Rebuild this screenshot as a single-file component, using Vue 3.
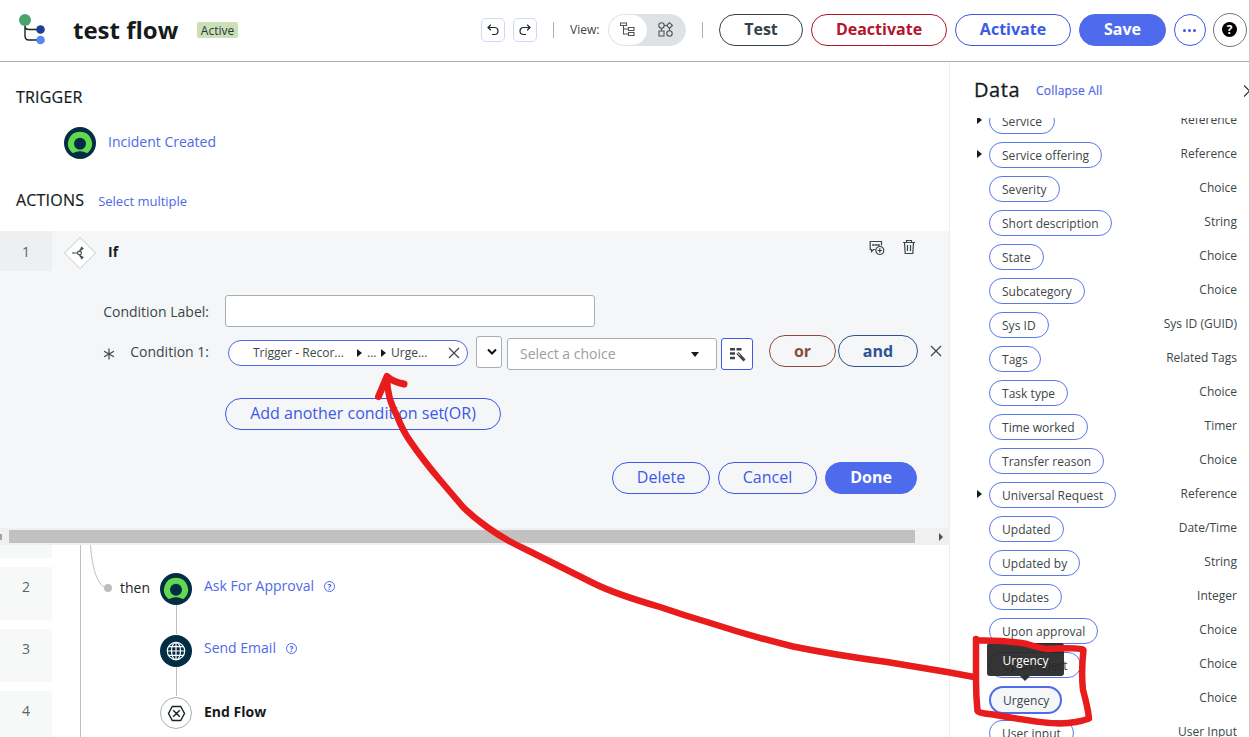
<template>
  <div class="designer">
    <header class="topbar">
      <svg class="logo" width="28" height="32" viewBox="0 0 28 32">
        <path d="M6 8V22Q6 26 10 26H20M6 8V12Q6 15.500 10 15.500H20" fill="none" stroke="#1c2426" stroke-width="1.400" />
        <circle cx="6" cy="6" r="6" fill="#4ba46e" />
        <circle cx="21.500" cy="15.500" r="4.300" fill="#1f3f94" />
        <circle cx="21.500" cy="26" r="4.300" fill="#5b86ee" />
      </svg>
      <h1 class="flow-title">test flow</h1>
      <span class="status">Active</span>

      <button class="square-btn undo">
        <svg width="12" height="12" viewBox="0 0 12 12" class="line-icon">
          <path d="M1 3.500H7.500A3.500 3.500 0 0 1 7.500 10.500H5M3.800 .8L1 3.500L3.800 6.200" />
        </svg>
      </button>
      <button class="square-btn">
        <svg width="12" height="12" viewBox="0 0 12 12" class="line-icon">
          <path d="M11 3.500H4.500A3.500 3.500 0 0 0 4.500 10.500H7M8.200 .8L11 3.500L8.200 6.200" />
        </svg>
      </button>
      <span class="divider"></span>
      <span class="view-label">View:</span>
      <div class="toggle">
        <span class="toggle-item on">
          <svg width="15" height="15" viewBox="0 0 15 15" class="gray-icon">
            <path d="M.5 1h6v2.500h-6zM8.500 5.500h5.500v3h-5.500zM8.500 10.500h5.500v3h-5.500zM3.500 3.500V12H8.500M3.500 7H8.500" />
          </svg>
        </span>
        <span class="toggle-item">
          <svg width="15" height="15" viewBox="0 0 15 15" class="gray-icon">
            <circle cx="3.500" cy="3.500" r="2.700" />
            <circle cx="11.500" cy="11.500" r="2.700" />
            <path d="M11.500 .6L14.400 3.500L11.500 6.400L8.600 3.500zM1 9h5v5h-5zM6.200 3.500H8.600M3.500 6.200V9M11.500 6.400V8.800" />
          </svg>
        </span>
      </div>
      <span class="divider second"></span>
      <button class="pill-btn dark test">Test</button>
      <button class="pill-btn red deactivate">Deactivate</button>
      <button class="pill-btn blue activate">Activate</button>
      <button class="pill-btn solid save">Save</button>
      <button class="round-btn more"><i></i><i></i><i></i></button>
      <button class="round-btn help"><b>?</b></button>
    </header>

    <div class="body">
      <main class="canvas">
        <h2 class="section-title">TRIGGER</h2>
        <div class="trigger">
          <svg width="32" height="32" viewBox="0 0 32 32">
            <use href="#now-badge" />
          </svg>
          <a class="node-link">Incident Created</a>
        </div>
        <div class="actions-head">
          <h2 class="section-title">ACTIONS</h2>
          <a class="select-multiple">Select multiple</a>
        </div>

        <section class="editor">
          <div class="editor-head">
            <span class="step-no">1</span>
            <svg class="diamond" width="34" height="34" viewBox="0 0 34 34">
              <path d="M17 1.500L32.500 17L17 32.500L1.500 17z" fill="#fff" stroke="#c4c8ca" />
              <g fill="none" stroke="#3b4648" stroke-width="1.100">
                <path d="M9 17H15M17 15Q17 12.500 19 12.500H20M17 19Q17 21.500 19 21.500H20M18 10.800L20 12.500L18 14.200M18 19.800L20 21.500L18 23.200" />
                <circle cx="16.500" cy="17" r="1.900" />
              </g>
            </svg>
            <strong class="if-label">If</strong>
            <svg class="comment-icon" width="16" height="16" viewBox="0 0 16 16">
              <g fill="none" stroke="#3b4648" stroke-width="1.200">
                <path d="M6 9.500H4.500L2.500 11.500V9.500H1.200V1.500H12.500V5.500" />
                <path d="M3 5H11M4.200 4V6M7 4V6M9.700 4V6" stroke-width="1" />
                <circle cx="10.800" cy="10.500" r="4" />
                <path d="M10.800 8.300V12.700M8.600 10.500H13" />
              </g>
            </svg>
            <svg class="trash-icon" width="14" height="16" viewBox="0 0 14 16">
              <path d="M1 3.500H13M4.500 3.500V1.500H9.500V3.500M2.500 3.500L3.200 14.500H10.800L11.500 3.500M5.500 6V12M8.500 6V12" fill="none" stroke="#3b4648" stroke-width="1.200" />
            </svg>
          </div>

          <div class="form-row label-row">
            <label>Condition Label:</label>
            <input class="text-input" type="text" />
          </div>

          <div class="form-row condition-row">
            <svg class="required" width="12" height="12" viewBox="0 0 12 12">
              <path d="M6 .5V11.500M1 3.200L11 8.800M11 3.200L1 8.800" stroke="#3b4648" stroke-width="1.200" />
            </svg>
            <label>Condition 1:</label>
            <div class="data-pill">
              <span class="crumb first">Trigger - Recor...</span>
              <i class="tri"></i>
              <span class="crumb">...</span>
              <i class="tri"></i>
              <span class="crumb last">Urge...</span>
              <svg width="12" height="12" viewBox="0 0 12 12" class="close"><path d="M1 1L11 11M11 1L1 11" /></svg>
            </div>
            <span class="operator">
              <svg width="10" height="8" viewBox="0 0 10 8"><path d="M1 1.500L5 5.500L9 1.500" fill="none" stroke="#111" stroke-width="2" /></svg>
            </span>
            <span class="choice">Select a choice<i></i></span>
            <button class="wand">
              <svg width="17" height="15" viewBox="0 0 17 15">
                <path d="M1 2.200H6M7.500 2.200H12.500M1 6.500H6M1 11H6" stroke="#3b4648" stroke-width="2.400" />
                <path d="M8.500 6L15.500 13.500" stroke="#3b4648" stroke-width="3" />
                <path d="M8.800 6.300L10.800 8.400" stroke="#fff" stroke-width="1" />
              </svg>
            </button>
            <button class="pill-btn or">or</button>
            <button class="pill-btn and">and</button>
            <svg width="12" height="12" viewBox="0 0 12 12" class="close row-close"><path d="M1 1L11 11M11 1L1 11" /></svg>
          </div>

          <button class="pill-btn light add-set">Add another condition set(OR)</button>

          <div class="editor-actions">
            <button class="pill-btn light delete">Delete</button>
            <button class="pill-btn light cancel">Cancel</button>
            <button class="pill-btn solid done">Done</button>
          </div>
          <div class="scrollbar">
            <i class="arrow-left"></i>
            <span class="thumb"></span>
            <i class="arrow-right"></i>
          </div>
        </section>

        <section class="steps">
          <svg class="connectors" width="200" height="192" viewBox="0 0 200 192">
            <g fill="none" stroke="#bcc0c4">
              <path d="M80.500 0V192M176.500 60V89M176.500 122V151" />
              <path d="M90.500 0C92 22 97 40 106 43" />
            </g>
            <circle cx="108" cy="43" r="4" fill="#bcbec1" />
          </svg>
          <div class="step-tail"></div>
          <div v-for="step in steps" :key="step.no" class="step">
            <span class="step-no">{{ step.no }}</span>
            <span class="branch">{{ step.branch }}</span>
            <svg class="step-icon" width="32" height="32" viewBox="0 0 32 32">
              <use v-if="step.icon === 'now'" href="#now-badge" />
              <template v-else-if="step.icon === 'globe'">
                <circle cx="16" cy="16" r="16" fill="#032d42" />
                <g fill="none" stroke="#fff" stroke-width="1.200">
                  <circle cx="16" cy="16" r="8.700" />
                  <ellipse cx="16" cy="16" rx="4.500" ry="8.700" />
                  <path d="M16 7V25M7.300 16H24.700M8.500 11.700H23.500M8.500 20.300H23.500" />
                </g>
              </template>
              <template v-else>
                <circle cx="16" cy="16" r="15.500" fill="#fff" stroke="#a9b0b4" />
                <path d="M12.300 9.500H20.700L24.500 16.500L20.700 23.500H12.300L8.500 16.500zM13.200 13.200L19.800 19.800M19.800 13.200L13.200 19.800" fill="none" stroke="#1d2527" stroke-width="1.400" />
              </template>
            </svg>
            <strong v-if="step.icon === 'end'" class="end-label">{{ step.name }}</strong>
            <template v-else>
              <a class="node-link">{{ step.name }}</a>
              <span class="hint">?</span>
            </template>
          </div>
        </section>
      </main>

      <aside class="data-panel">
        <div class="data-head">
          <h2>Data</h2>
          <a>Collapse All</a>
          <svg width="5" height="12" viewBox="0 0 5 12"><path d="M0 .5L5.500 6L0 11.500" fill="none" stroke="#222" stroke-width="1.200" /></svg>
        </div>
        <div class="data-list">
          <div v-for="field in fields" :key="field.name" class="field">
            <span class="expander"><i v-if="field.type === 'Reference'" class="tri"></i></span>
            <span class="field-pill" :class="{ active: field.name === 'Urgency' }">{{ field.name }}</span>
            <span class="field-type">{{ field.type }}</span>
            <span v-if="field.name === 'Urgency'" class="tooltip">Urgency</span>
          </div>
        </div>
      </aside>
    </div>

    <!-- hand-drawn arrow from the Urgency pill to the condition field -->
    <svg class="markup" width="1250" height="737" viewBox="0 0 1250 737">
      <g fill="none" stroke="#e81c1c" stroke-linecap="round" stroke-linejoin="round">
        <path stroke-width="6.500" d="M387 377C387 392 390 402 397 416C401 426 405 434 410 441Q423 460 440 480L463 507Q473 517 487 527Q505 540 527 550L593 583Q615 594 660 607Q683 615 707 622Q750 636 793 646.500Q835 655 887 662L947 672L974 677" />
        <path stroke-width="7" d="M378.500 396.500L387 376.500Q393 382 404 384" />
        <path stroke-width="6.500" d="M976 639V680Q976 696 977.500 711Q978 713 993 714.500Q1040 723 1060 723.500Q1077 723 1089 718.500Q1088 708 1083 690Q1081 672 1083.500 650Q1081 647 1047 649Q1043 649 1027 644Q1005 640 978 640.500" />
      </g>
    </svg>

    <svg class="defs" width="0" height="0">
      <g id="now-badge">
        <circle cx="16" cy="16" r="16" fill="#032d42" />
        <path d="M16 4.700A12 12 0 0 0 7.600 25.300Q9 26.500 11 25.300Q16 23.300 21 25.300Q23 26.500 24.400 25.300A12 12 0 0 0 16 4.700z" fill="#62d84e" />
        <circle cx="16" cy="16.700" r="6" fill="#032d42" />
      </g>
    </svg>
  </div>
</template>

<script setup>
import { ref } from 'vue'

const steps = ref([
  { no: 2, name: 'Ask For Approval', icon: 'now', branch: 'then' },
  { no: 3, name: 'Send Email', icon: 'globe', branch: '' },
  { no: 4, name: 'End Flow', icon: 'end', branch: '' }
])

const fields = ref([
  { name: 'Service', type: 'Reference' },
  { name: 'Service offering', type: 'Reference' },
  { name: 'Severity', type: 'Choice' },
  { name: 'Short description', type: 'String' },
  { name: 'State', type: 'Choice' },
  { name: 'Subcategory', type: 'Choice' },
  { name: 'Sys ID', type: 'Sys ID (GUID)' },
  { name: 'Tags', type: 'Related Tags' },
  { name: 'Task type', type: 'Choice' },
  { name: 'Time worked', type: 'Timer' },
  { name: 'Transfer reason', type: 'Choice' },
  { name: 'Universal Request', type: 'Reference' },
  { name: 'Updated', type: 'Date/Time' },
  { name: 'Updated by', type: 'String' },
  { name: 'Updates', type: 'Integer' },
  { name: 'Upon approval', type: 'Choice' },
  { name: 'Upon reject', type: 'Choice' },
  { name: 'Urgency', type: 'Choice' },
  { name: 'User input', type: 'User Input' }
])
</script>

<style>
body {
  margin: 0;
  overflow: hidden;
}
</style>

<style scoped>
.designer {
  position: relative;
  width: 1250px;
  height: 737px;
  box-sizing: border-box;
  border-right: 1px solid #c9cbcd;
  overflow: hidden;
  display: flex;
  flex-direction: column;
  background: #fff;
  color: #3b4648;
  font-family: "Open Sans", "Noto Sans", sans-serif;
  font-size: 14px;
}

.designer * {
  box-sizing: border-box;
}

h1,
h2 {
  margin: 0;
}

button {
  flex: none;
  padding: 0;
  font-family: inherit;
  background: #fff;
}

svg {
  flex: none;
}

.defs {
  position: absolute;
}

.topbar {
  height: 62px;
  flex: none;
  display: flex;
  align-items: center;
  padding: 0 0 2px 19px;
  border-bottom: 1px solid #a6adaf;
}

.logo {
  margin-top: 1px;
}

.flow-title {
  width: 105px;
  margin-left: 26px;
  color: #151b1d;
  font-size: 24px;
  line-height: 32px;
  font-weight: 700;
  white-space: nowrap;
}

.status {
  width: 41px;
  height: 16px;
  margin-left: 19px;
  border-radius: 2px;
  background: #cbe0b8;
  color: #2c3638;
  font-size: 12px;
  line-height: 18px;
  text-align: center;
}

.square-btn {
  width: 24px;
  height: 24px;
  display: flex;
  align-items: center;
  justify-content: center;
  margin-right: 8px;
  border: 1px solid #cfd7fa;
  border-radius: 5px;
}

.undo {
  margin-left: 243px;
}

.line-icon {
  fill: none;
  stroke: #1d2527;
  stroke-width: 1.200;
}

.gray-icon {
  margin-right: 2px;
  fill: none;
  stroke: #4a5557;
  stroke-width: 1.100;
}

.divider {
  width: 1px;
  height: 16px;
  margin-left: 8px;
  background: #a9b0b3;
}

.divider.second {
  margin: 0 16px;
}

.view-label {
  width: 30px;
  margin: 0 8px 0 16px;
  font-size: 12px;
  white-space: nowrap;
}

.toggle {
  width: 78px;
  height: 32px;
  display: flex;
  border: 1px solid #dfe2e5;
  border-radius: 16px;
  background: #dfe2e5;
}

.toggle-item {
  width: 38px;
  display: flex;
  align-items: center;
  justify-content: center;
}

.toggle-item.on {
  border-radius: 15px;
  background: #fff;
}

.pill-btn {
  height: 32px;
  padding-bottom: 2px;
  border: 1px solid;
  border-radius: 16px;
  font-size: 16px;
  line-height: 28px;
  font-weight: 700;
  white-space: nowrap;
}

.dark {
  border-color: #33424a;
  color: #33424a;
}

.red {
  border-color: #b3152c;
  color: #b3152c;
}

.blue,
.light {
  border-color: #3c59e7;
  color: #3c59e7;
}

.light {
  background: transparent;
  font-weight: 400;
}

.solid {
  border-color: #4d6bec;
  background: #4d6bec;
  color: #fff;
}

.test {
  width: 84px;
}

.deactivate {
  width: 136px;
  margin-left: 8px;
}

.activate {
  width: 116px;
  margin-left: 8px;
}

.save {
  width: 87px;
  margin-left: 8px;
}

.round-btn {
  display: flex;
  align-items: center;
  justify-content: center;
  border: 1px solid #3c59e7;
  border-radius: 50%;
}

.more {
  width: 32px;
  height: 32px;
  gap: 2px;
  margin-left: 8px;
  padding-top: 1px;
  padding-right: 1px;
}

.more i {
  width: 3px;
  height: 3px;
  border-radius: 50%;
  background: #3c59e7;
}

.help {
  width: 34px;
  height: 34px;
  margin-left: 7px;
  padding-right: 1px;
  border-color: #70787b;
}

.help b {
  width: 15px;
  height: 15px;
  border-radius: 50%;
  background: #000;
  color: #fff;
  font-size: 12px;
  line-height: 15px;
}

.body {
  flex: 1;
  min-height: 0;
  display: flex;
}

.canvas {
  width: 950px;
  flex: none;
  display: flex;
  flex-direction: column;
  padding-top: 24px;
  border-right: 1px solid #eceeef;
}

.section-title {
  margin-left: 16px;
  color: #151b1d;
  font-size: 16px;
  line-height: 22px;
  font-weight: 400;
  letter-spacing: 0.2px;
  -webkit-text-stroke: 0.2px #151b1d;
}

.trigger {
  height: 32px;
  display: flex;
  gap: 12px;
  margin: 19px 0 0 64px;
}

.node-link {
  color: #4f69e8;
  line-height: 30px;
  white-space: nowrap;
}

.actions-head {
  height: 72px;
  display: flex;
  align-items: center;
  gap: 14px;
  padding-top: 10px;
}

.select-multiple {
  padding-top: 2px;
  color: #4f69e8;
  font-size: 13px;
}

.editor {
  height: 314px;
  flex: none;
  display: flex;
  flex-direction: column;
  background: #f4f6f8;
}

.editor-head {
  height: 40px;
  display: flex;
  align-items: flex-start;
}

.step-no {
  width: 52px;
  height: 40px;
  flex: none;
  color: #5a6567;
  line-height: 42px;
  text-align: center;
  background: #eeeff1;
}

.diamond {
  margin: 5px 0 0 11px;
}

.if-label {
  width: 20px;
  margin-left: 11px;
  color: #151b1d;
  line-height: 42px;
}

.comment-icon {
  margin: 9px 0 0 741px;
}

.trash-icon {
  margin: 8px 0 0 17px;
}

.form-row {
  display: flex;
}

.form-row label {
  line-height: 34px;
  white-space: nowrap;
}

.label-row {
  height: 32px;
  margin-top: 24px;
}

.label-row label {
  width: 209px;
  text-align: right;
}

.text-input {
  width: 370px;
  height: 32px;
  margin-left: 16px;
  border: 1px solid #a6afb4;
  border-radius: 3px;
  background: #fff;
}

.condition-row {
  margin-top: 8px;
  height: 35px;
}

.required {
  margin: 13px 0 0 103px;
}

.condition-row label {
  width: 94px;
  line-height: 33px;
  text-align: right;
}

.data-pill {
  width: 240px;
  height: 26px;
  display: flex;
  align-items: center;
  margin: 5px 0 0 19px;
  padding-left: 24px;
  border: 1px solid #4d6bec;
  border-radius: 13px;
  background: #fff;
  font-size: 12px;
}

.crumb {
  width: 14px;
  line-height: 24px;
  white-space: nowrap;
}

.crumb.first {
  width: 104px;
}

.crumb.last {
  width: 57px;
}

.tri {
  width: 0;
  height: 0;
  display: block;
  border: 4px solid transparent;
  border-left: 5px solid #151b1d;
  border-right: 0;
}

.data-pill .tri {
  margin-right: 5px;
}

.close {
  fill: none;
  stroke: #3b4648;
  stroke-width: 1.200;
}

.operator {
  width: 26px;
  height: 32px;
  display: flex;
  align-items: center;
  justify-content: center;
  margin: 1px 0 0 8px;
  padding-left: 5px;
  border: 1px solid #a6afb4;
  border-radius: 3px;
  background: #fff;
}

.choice {
  width: 210px;
  height: 32px;
  display: flex;
  align-items: center;
  justify-content: space-between;
  margin: 3px 0 0 5px;
  padding: 0 17px 2px 12px;
  border: 1px solid #a6afb4;
  border-radius: 3px;
  background: #fff;
  color: #9aa0a2;
}

.choice i {
  margin-top: 3px;
  border: 4.500px solid transparent;
  border-top: 5px solid #151b1d;
  border-bottom: 0;
}

.wand {
  width: 32px;
  height: 32px;
  display: flex;
  align-items: center;
  justify-content: center;
  margin: 3px 0 0 4px;
  border: 1px solid #3c59e7;
  border-radius: 3px;
}

.or {
  width: 67px;
  margin-left: 16px;
  padding-bottom: 0;
  background: transparent;
  border-color: #8b4d39;
  color: #8b4d39;
}

.and {
  width: 80px;
  margin-left: 2px;
  padding-bottom: 0;
  background: transparent;
  border-color: #305391;
  color: #305391;
}

.row-close {
  margin: 10px 0 0 12px;
}

.add-set {
  width: 276px;
  margin: 28px 0 0 225px;
}

.editor-actions {
  display: flex;
  gap: 8px;
  margin: 32px 0 0 612px;
}

.delete {
  width: 98px;
}

.cancel {
  width: 99px;
}

.done {
  width: 92px;
}

.scrollbar {
  height: 17px;
  display: flex;
  align-items: center;
  margin-top: auto;
  background: #f0f0f0;
}

.arrow-left {
  width: 2px;
  height: 6px;
  margin-right: 7px;
  background: #a3a3a3;
}

.thumb {
  width: 906px;
  height: 13px;
  background: #c1c1c1;
}

.arrow-right {
  margin-left: 24px;
  border: 4px solid transparent;
  border-left: 4px solid #505050;
  border-right: 0;
}

.steps {
  position: relative;
  flex: 1;
  min-height: 0;
  overflow: hidden;
}

.connectors {
  position: absolute;
  left: 0;
  top: 0;
}

.step-tail {
  width: 52px;
  height: 13px;
  background: #f7f9f8;
}

.step {
  height: 53px;
  display: flex;
  margin-top: 9px;
}

.step .step-no {
  height: 53px;
  line-height: 40px;
  background: #f7f9f8;
}

.branch {
  width: 56px;
  margin-left: 52px;
  padding-left: 16px;
  color: #1d2527;
  line-height: 41px;
}

.step-icon {
  position: relative;
  margin-top: 6px;
}

.step .node-link,
.end-label {
  margin-left: 12px;
  line-height: 37px;
}

.end-label {
  color: #151b1d;
  line-height: 42px;
}

.hint {
  width: 11px;
  height: 11px;
  margin: 14px 0 0 10px;
  border: 1px solid #4f69e8;
  border-radius: 50%;
  color: #3c59e7;
  font-size: 8px;
  line-height: 9px;
  font-weight: 700;
  text-align: center;
}

.data-panel {
  flex: 1;
  min-width: 0;
  display: flex;
  flex-direction: column;
}

.data-head {
  height: 56px;
  flex: none;
  display: flex;
  align-items: center;
  padding-left: 24px;
}

.data-head h2 {
  width: 47px;
  margin: -2px 15px 0 0;
  color: #151b1d;
  font-size: 20px;
  font-weight: 500;
  letter-spacing: 0.6px;
  -webkit-text-stroke: 0.3px #151b1d;
}

.data-head a {
  color: #4f69e8;
  font-size: 12px;
  letter-spacing: 0.2px;
  -webkit-text-stroke: 0.2px #4f69e8;
  white-space: nowrap;
}

.data-head svg {
  margin: 2px 0 0 auto;
}

.data-list {
  flex: 1;
  min-height: 0;
  overflow: hidden;
}

.field {
  position: relative;
  height: 26px;
  display: flex;
  align-items: center;
  margin-bottom: 8px;
  padding-right: 12px;
}

.field:first-child {
  margin-top: -10px;
}

.expander {
  width: 12px;
  margin: -2px 0 0 27px;
}

.field-pill {
  height: 26px;
  padding: 0 12px;
  border: 1px solid #5b77ee;
  border-radius: 13px;
  font-size: 12px;
  line-height: 25px;
  letter-spacing: 0.03px;
  white-space: nowrap;
}

.field-pill.active {
  height: 28px;
  margin-top: 2px;
  padding: 0 11px 0 12px;
  border: 2px solid #4d6bec;
  border-radius: 14px;
  background: #f4f6f8;
}

.field-type {
  margin-left: auto;
  font-size: 12px;
  line-height: 22px;
  padding-bottom: 3px;
}

.tooltip {
  position: absolute;
  left: 37px;
  top: -43px;
  width: 77px;
  height: 33px;
  border-radius: 3px;
  background: rgba(38, 38, 38, 0.93);
  color: #fff;
  font-size: 12px;
  line-height: 35px;
  text-align: center;
}

.tooltip::after {
  content: '';
  position: absolute;
  left: 33px;
  top: 33px;
  border: 5px solid transparent;
  border-top-color: #303030;
  border-bottom: 0;
}

.markup {
  position: absolute;
  left: 0;
  top: 0;
  pointer-events: none;
}
</style>
